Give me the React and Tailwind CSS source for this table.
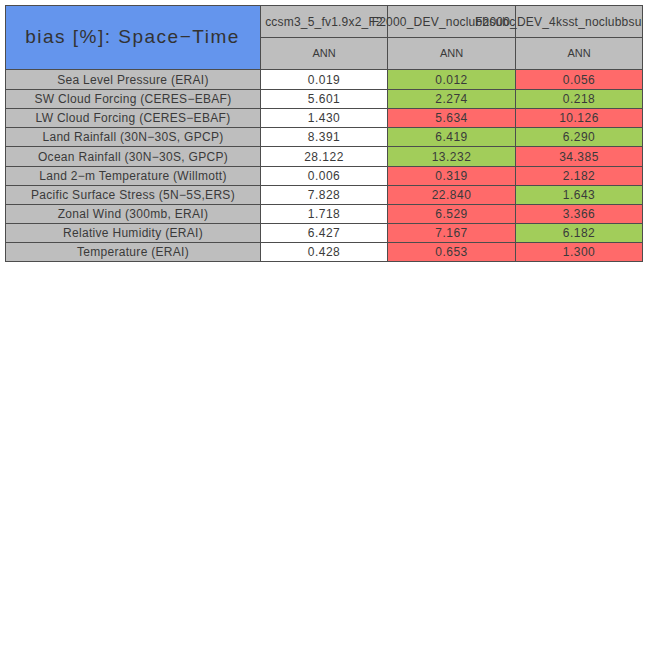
const rows = [
  ['Sea Level Pressure (ERAI)', '0.019', ['0.012', 'g'], ['0.056', 'r']],
  ['SW Cloud Forcing (CERES\u2212EBAF)', '5.601', ['2.274', 'g'], ['0.218', 'g']],
  ['LW Cloud Forcing (CERES\u2212EBAF)', '1.430', ['5.634', 'r'], ['10.126', 'r']],
  ['Land Rainfall (30N\u221230S, GPCP)', '8.391', ['6.419', 'g'], ['6.290', 'g']],
  ['Ocean Rainfall (30N\u221230S, GPCP)', '28.122', ['13.232', 'g'], ['34.385', 'r']],
  ['Land 2\u2212m Temperature (Willmott)', '0.006', ['0.319', 'r'], ['2.182', 'r']],
  ['Pacific Surface Stress (5N\u22125S,ERS)', '7.828', ['22.840', 'r'], ['1.643', 'g']],
  ['Zonal Wind (300mb, ERAI)', '1.718', ['6.529', 'r'], ['3.366', 'r']],
  ['Relative Humidity (ERAI)', '6.427', ['7.167', 'r'], ['6.182', 'g']],
  ['Temperature (ERAI)', '0.428', ['0.653', 'r'], ['1.300', 'r']],
]

const cellBg = { g: 'bg-[#a2cd5a]', r: 'bg-[#ff6a6a]' }

const font = { fontFamily: '"Liberation Sans", Arial, sans-serif' }

// long case names spill over their cells, centred, like the plot does
const HeadName = ({ children }) => (
  <div className="bg-[#bebebe] flex items-center justify-center whitespace-nowrap text-[12px] tracking-[0.2px] text-[#3a3a3a]">
    <span>{children}</span>
  </div>
)

export default function App() {
  return (
    <div className="w-[648px] h-[648px] bg-white pt-[5px] pl-[5px]" style={font}>
      <div className="w-[638px] grid grid-cols-[254px_126px_127px_126px] grid-rows-[31px_31px_19px_18px_18px_18px_19px_18px_18px_18px_18px_18px] gap-px bg-[#4d4d4d] border border-[#4d4d4d] overflow-hidden">
        {/* title */}
        <div className="row-span-2 bg-[#6495ed] flex items-center justify-center text-[19px] tracking-[1.5px] text-[#333] -mt-px -ml-px">
          bias [%]: Space{'\u2212'}Time
        </div>
        <HeadName>ccsm3_5_fv1.9x2_F2</HeadName>
        <HeadName>F2000_DEV_noclubbsubcolx</HeadName>
        <HeadName>F2000_DEV_4ksst_noclubbsubcolxyz</HeadName>
        {['ANN', 'ANN', 'ANN'].map((t, i) => (
          <div key={i} className="bg-[#bebebe] flex items-center justify-center text-[11px] text-[#3a3a3a]">
            {t}
          </div>
        ))}

        {rows.map(([label, base, a, b]) => (
          <div key={label} className="contents">
            <div className="bg-[#bebebe] flex items-center justify-center text-[12px] tracking-[0.3px] text-[#3a3a3a] whitespace-nowrap">
              {label}
            </div>
            <div className="bg-white flex items-center justify-center text-[12px] tracking-[0.5px] text-[#3a3a3a]">
              {base}
            </div>
            <div className={`${cellBg[a[1]]} flex items-center justify-center text-[12px] tracking-[0.5px] text-[#3a3a3a]`}>
              {a[0]}
            </div>
            <div className={`${cellBg[b[1]]} flex items-center justify-center text-[12px] tracking-[0.5px] text-[#3a3a3a]`}>
              {b[0]}
            </div>
          </div>
        ))}
      </div>
    </div>
  )
}
